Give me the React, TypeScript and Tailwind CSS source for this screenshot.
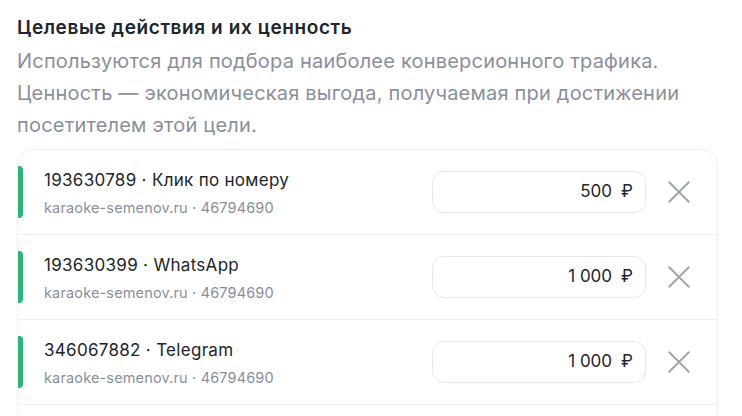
import React from 'react';

interface Goal {
  id: string;
  name: string;
  site: string;
  counter: string;
  value: string;
}

const goals: Goal[] = [
  { id: '193630789', name: 'Клик по номеру', site: 'karaoke-semenov.ru', counter: '46794690', value: '500' },
  { id: '193630399', name: 'WhatsApp', site: 'karaoke-semenov.ru', counter: '46794690', value: '1 000' },
  { id: '346067882', name: 'Telegram', site: 'karaoke-semenov.ru', counter: '46794690', value: '1 000' },
];

const CloseIcon = () => (
  <svg className="w-[26px] h-[26px]" fill="none" stroke="currentColor" viewBox="0 0 24 24">
    <path strokeLinecap="round" strokeWidth="1.8" d="M3 3l18 18M21 3L3 21" />
  </svg>
);

const GoalRow: React.FC<{ goal: Goal }> = ({ goal }) => (
  <div className="flex items-stretch h-[85px] border-b border-[#eef0f4]">
    <div className="-ml-px w-[6px] my-4 rounded-r-[4px] bg-[#2fb37a] shrink-0" />
    <div className="flex flex-col justify-center pl-[21px] flex-1 min-w-0 mt-[1px]">
      <p className="text-[17px] leading-[24px] text-[#21252b] tracking-[0.3px]">
        {goal.id} · {goal.name}
      </p>
      <p className="text-[14.5px] leading-[20px] mt-[6px] text-[#8a8f9c] tracking-[0.15px]">
        {goal.site} · {goal.counter}
      </p>
    </div>
    <div className="flex items-center gap-[20px] pr-[25px]">
      <div className="w-[214px] h-[42px] rounded-[12px] border border-[#e6e8ef] flex items-center justify-end pr-[12px] text-[17px] text-[#21252b]">
        {goal.value}
        <span className="ml-[9px]">₽</span>
      </div>
      <span className="text-[#9fa4b0]">
        <CloseIcon />
      </span>
    </div>
  </div>
);

export default function App() {
  return (
    <div className="w-[742px] h-[416px] overflow-hidden bg-white px-[17px] pt-[15px] font-['Inter',sans-serif]">
      <h2 className="text-[19px] leading-[26px] font-semibold text-[#21252b] tracking-[0.6px]">
        Целевые действия и их ценность
      </h2>
      <p className="text-[20px] leading-[32px] text-[#8a8f9c] mt-[4px] tracking-[0.2px]">
        Используются для подбора наиболее конверсионного трафика.
        <br />
        Ценность — экономическая выгода, получаемая при достижении
        <br />
        посетителем этой цели.
      </p>
      <div className="mt-[8px] w-[701px] h-[300px] rounded-[16px] border border-[#eef0f4] overflow-hidden">
        {goals.map((g) => (
          <GoalRow key={g.id} goal={g} />
        ))}
      </div>
    </div>
  );
}
